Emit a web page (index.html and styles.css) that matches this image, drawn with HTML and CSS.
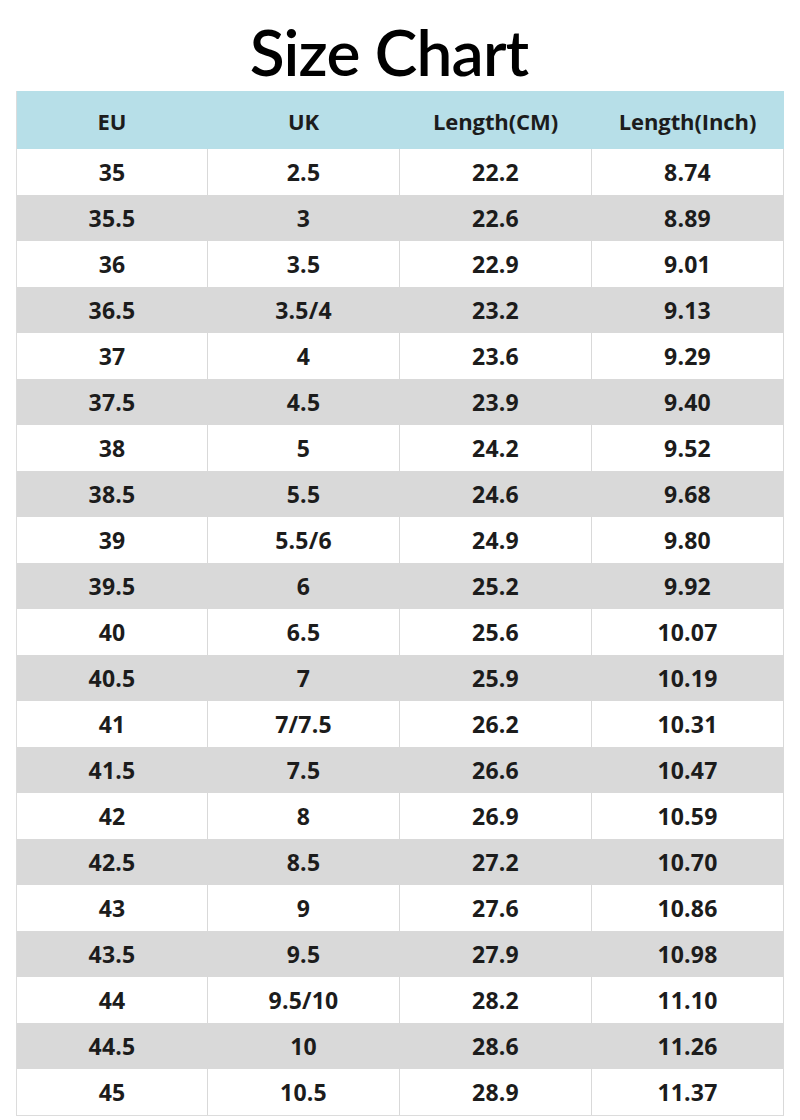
FILE: index.html
```html
<!DOCTYPE html>
<html>
<head>
<meta charset="utf-8">
<link rel="stylesheet" href="styles.css">
</head>
<body>
<h1 class="title">Size Chart</h1>
<div class="chart">
  <div class="row head"><div>EU</div><div>UK</div><div>Length(CM)</div><div>Length(Inch)</div></div>
  <div class="row"><div>35</div><div>2.5</div><div>22.2</div><div>8.74</div></div>
  <div class="row"><div>35.5</div><div>3</div><div>22.6</div><div>8.89</div></div>
  <div class="row"><div>36</div><div>3.5</div><div>22.9</div><div>9.01</div></div>
  <div class="row"><div>36.5</div><div>3.5/4</div><div>23.2</div><div>9.13</div></div>
  <div class="row"><div>37</div><div>4</div><div>23.6</div><div>9.29</div></div>
  <div class="row"><div>37.5</div><div>4.5</div><div>23.9</div><div>9.40</div></div>
  <div class="row"><div>38</div><div>5</div><div>24.2</div><div>9.52</div></div>
  <div class="row"><div>38.5</div><div>5.5</div><div>24.6</div><div>9.68</div></div>
  <div class="row"><div>39</div><div>5.5/6</div><div>24.9</div><div>9.80</div></div>
  <div class="row"><div>39.5</div><div>6</div><div>25.2</div><div>9.92</div></div>
  <div class="row"><div>40</div><div>6.5</div><div>25.6</div><div>10.07</div></div>
  <div class="row"><div>40.5</div><div>7</div><div>25.9</div><div>10.19</div></div>
  <div class="row"><div>41</div><div>7/7.5</div><div>26.2</div><div>10.31</div></div>
  <div class="row"><div>41.5</div><div>7.5</div><div>26.6</div><div>10.47</div></div>
  <div class="row"><div>42</div><div>8</div><div>26.9</div><div>10.59</div></div>
  <div class="row"><div>42.5</div><div>8.5</div><div>27.2</div><div>10.70</div></div>
  <div class="row"><div>43</div><div>9</div><div>27.6</div><div>10.86</div></div>
  <div class="row"><div>43.5</div><div>9.5</div><div>27.9</div><div>10.98</div></div>
  <div class="row"><div>44</div><div>9.5/10</div><div>28.2</div><div>11.10</div></div>
  <div class="row"><div>44.5</div><div>10</div><div>28.6</div><div>11.26</div></div>
  <div class="row"><div>45</div><div>10.5</div><div>28.9</div><div>11.37</div></div>
</div>
</body>
</html>
```
FILE: styles.css
```css
html, body {
  margin: 0;
  padding: 0;
  background: #ffffff;
}
body {
  width: 800px;
  height: 1120px;
  overflow: hidden;
  font-family: "Open Sans", "Noto Sans", sans-serif;
  color: #1c1c1c;
}
.title {
  margin: 0;
  height: 91px;
  display: flex;
  align-items: flex-end;
  justify-content: center;
  font-family: "Lato", "Open Sans", sans-serif;
  font-weight: 600;
  font-size: 64px;
  line-height: 1;
  padding-right: 22px;
  box-sizing: border-box;
  padding-bottom: 7px;
  color: #000;
  letter-spacing: -0.8px;
}
.chart {
  margin: 0 16px;
  width: 768px;
  border-left: 1px solid #dcdcdc;
  border-bottom: 1px solid #dcdcdc;
  box-sizing: border-box;
}
.row {
  display: grid;
  grid-template-columns: 191px 192px 192px 192px;
  height: 46px;
  background: #ffffff;
}
.row:nth-child(odd) {
  background: #d9d9d9;
}
.row > div {
  display: flex;
  align-items: center;
  justify-content: center;
  border-right: 1px solid #d9d9d9;
  font-weight: 700;
  font-size: 23px;
  letter-spacing: 0.2px;
}
.row.head {
  height: 58px;
  background: #b7dfe8;
}
.row.head > div {
  border-right-color: #b7dfe8;
  font-weight: 700;
  font-size: 22px;
  letter-spacing: -0.1px;
  padding-top: 2px;
}
```
